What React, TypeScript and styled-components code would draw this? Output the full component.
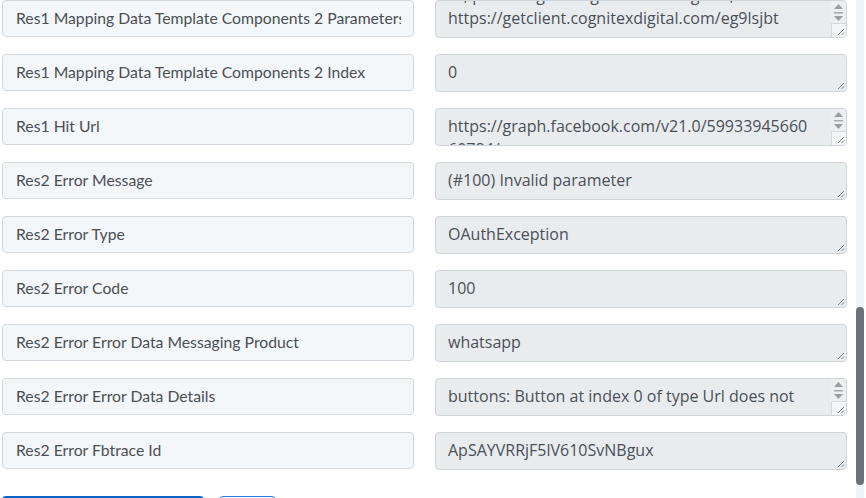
import React from "react";
import styled, { createGlobalStyle } from "styled-components";

const Global = createGlobalStyle`
  html, body { margin: 0; padding: 0; background: #ffffff; }
  body { width: 866px; height: 498px; overflow: hidden; }
  * { box-sizing: border-box; }
`;

const Viewport = styled.div`
  display: flex;
  width: 866px;
  height: 498px;
  overflow: hidden;
`;

const Main = styled.div`
  flex: 1;
  display: flex;
  flex-direction: column;
  padding-left: 2px;
  overflow: hidden;
`;

const Rows = styled.div`
  display: flex;
  flex-direction: column;
  gap: 16px;
`;

const Row = styled.div`
  display: grid;
  grid-template-columns: 412px 412px;
  column-gap: 21px;
  align-items: start;
`;

const Label = styled.div`
  height: 37px;
  border: 1px solid #d3d8de;
  border-radius: 4px;
  background: #f4f7fa;
  padding: 0 12px 2px 13px;
  display: flex;
  align-items: center;
  font-family: Lato, "Noto Sans", sans-serif;
  font-size: 15.75px;
  color: #4a4f54;
`;

const LabelText = styled.span`
  flex: 1;
  min-width: 0;
  white-space: nowrap;
  overflow: hidden;
`;

const Field = styled.div`
  position: relative;
  height: 38px;
  border: 1px solid #ced4da;
  border-radius: 4px;
  background: #e9ecef;
  overflow: hidden;
`;

const FieldText = styled.div<{ $offset: number }>`
  padding: 6px 28px 0 12px;
  margin-top: ${(p) => p.$offset}px;
  font-family: "Open Sans", "Noto Sans", sans-serif;
  font-size: 16px;
  line-height: 23px;
  color: #495057;
`;

const Line = styled.div`
  white-space: pre;
`;

const ScrollCol = styled.div`
  position: absolute;
  top: 0;
  right: 0;
  bottom: 0;
  width: 15px;
  display: flex;
  flex-direction: column;
  background: #eceef0;
`;

const Arrows = styled.div`
  flex: 1;
  display: flex;
  flex-direction: column;
  align-items: center;
  justify-content: flex-start;
  padding-top: 2px;
`;

const Corner = styled.div`
  height: 15px;
  border-top: 1px solid #d6d9dc;
  border-left: 1px solid #d6d9dc;
  background: #f4f5f6;
`;

const Grip = styled.svg`
  position: absolute;
  right: 1px;
  bottom: 1px;
  width: 9px;
  height: 9px;
`;

const Buttons = styled.div`
  display: flex;
  gap: 15px;
  margin-top: 26px;
`;

const PrimaryButton = styled.div`
  width: 202px;
  height: 36px;
  border-radius: 4px;
  background: #0b63c6;
`;

const OutlineButton = styled.div`
  width: 57px;
  height: 36px;
  border-radius: 4px;
  border: 1px solid #2a7be0;
  background: #ffffff;
`;

const Track = styled.div`
  width: 8px;
  margin-right: 2px;
  background: #eef4fc;
  display: flex;
  flex-direction: column;
`;

const Thumb = styled.div`
  margin-top: 307px;
  height: 178px;
  border-radius: 4px;
  background: #6c737c;
`;

type Item = {
  label: string;
  lines: string[];
  offset?: number;
  scroll?: boolean;
};

const items: Item[] = [
  {
    label: "Res1 Mapping Data Template Components 2 Parameters",
    lines: [
      "Hi, please sign using the following link,",
      "https://getclient.cognitexdigital.com/eg9lsjbt",
    ],
    offset: -23,
    scroll: true,
  },
  { label: "Res1 Mapping Data Template Components 2 Index", lines: ["0"] },
  {
    label: "Res1 Hit Url",
    lines: ["https://graph.facebook.com/v21.0/59933945660", "60784/messages"],
    scroll: true,
  },
  { label: "Res2 Error Message", lines: ["(#100) Invalid parameter"] },
  { label: "Res2 Error Type", lines: ["OAuthException"] },
  { label: "Res2 Error Code", lines: ["100"] },
  { label: "Res2 Error Error Data Messaging Product", lines: ["whatsapp"] },
  {
    label: "Res2 Error Error Data Details",
    lines: ["buttons: Button at index 0 of type Url does not"],
    scroll: true,
  },
  { label: "Res2 Error Fbtrace Id", lines: ["ApSAYVRRjF5lV610SvNBgux"] },
];

const GripIcon = () => (
  <Grip viewBox="0 0 9 9">
    <line x1="8" y1="2" x2="2" y2="8" stroke="#7d8286" strokeWidth="1" />
    <line x1="8" y1="5.5" x2="5.5" y2="8" stroke="#7d8286" strokeWidth="1" />
  </Grip>
);

const ScrollBar = () => (
  <ScrollCol>
    <Arrows>
      <svg width="11" height="20" viewBox="0 0 11 20">
        <path d="M5.5 1 L10 6 L1 6 Z" fill="#9a9ea3" />
        <rect x="1" y="9" width="9" height="1.5" fill="#a7abaf" />
        <path d="M1 13 L10 13 L5.5 18 Z" fill="#9a9ea3" />
      </svg>
    </Arrows>
    <Corner />
  </ScrollCol>
);

export default function App() {
  return (
    <>
      <Global />
      <Viewport>
        <Main>
          <Rows>
            {items.map((it) => (
              <Row key={it.label}>
                <Label>
                  <LabelText>{it.label}</LabelText>
                </Label>
                <Field>
                  <FieldText $offset={it.offset ?? 0}>
                    {it.lines.map((l, i) => (
                      <Line key={i}>{l}</Line>
                    ))}
                  </FieldText>
                  {it.scroll && <ScrollBar />}
                  <GripIcon />
                </Field>
              </Row>
            ))}
          </Rows>
          <Buttons>
            <PrimaryButton />
            <OutlineButton />
          </Buttons>
        </Main>
        <Track>
          <Thumb />
        </Track>
      </Viewport>
    </>
  );
}
